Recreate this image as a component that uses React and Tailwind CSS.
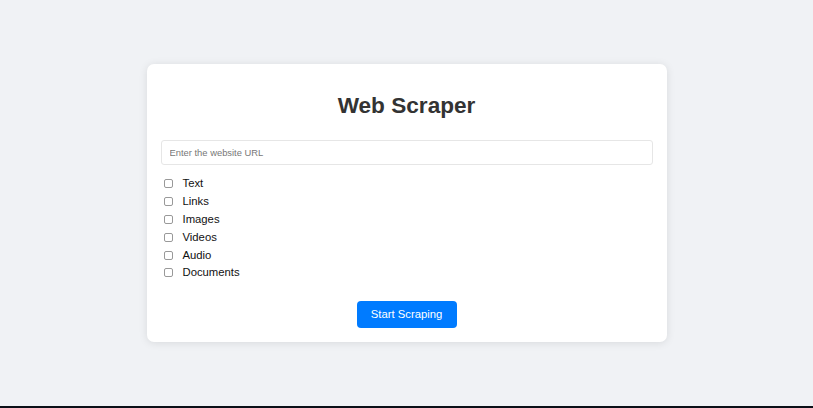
import { useState } from "react";

const options = ["Text", "Links", "Images", "Videos", "Audio", "Documents"];

export default function App() {
  const [url, setUrl] = useState("");
  const [selected, setSelected] = useState([]);

  const toggle = (name) =>
    setSelected((prev) =>
      prev.includes(name) ? prev.filter((n) => n !== name) : [...prev, name]
    );

  return (
    <div className="flex flex-col h-[408px] font-['Liberation_Sans',Arial,sans-serif]">
      <div className="flex-1 flex items-center justify-center bg-[#f0f2f5]">
        <div className="w-[520px] h-[278px] bg-white rounded-[7px] shadow-[0_1px_8px_rgba(0,0,0,0.1)] p-[14px] flex flex-col">
          <h1 className="mt-[15px] text-center text-[22.6px] leading-[26px] font-bold text-[#333]">
            Web Scraper
          </h1>

          <input
            type="text"
            value={url}
            onChange={(e) => setUrl(e.target.value)}
            placeholder="Enter the website URL"
            className="mt-[21px] h-[25px] w-full border border-[#e6e6e6] rounded-[3px] px-[8px] text-[9.4px] text-[#333] placeholder:text-[#777] outline-none"
          />

          <div className="mt-[10px] flex flex-col">
            {options.map((name) => (
              <label
                key={name}
                className="h-[17.8px] flex items-center text-[11.3px] text-[#111] cursor-pointer"
              >
                <input
                  type="checkbox"
                  checked={selected.includes(name)}
                  onChange={() => toggle(name)}
                  className="appearance-none ml-[3px] mr-[10px] w-[9px] h-[9px] border border-[#999] rounded-[2px] bg-white checked:bg-[#007bff] checked:border-[#007bff]"
                />
                {name}
              </label>
            ))}
          </div>

          <button className="mt-[19px] self-center w-[100px] h-[27px] bg-[#007bff] text-white text-[11.3px] rounded-[4px]">
            Start Scraping
          </button>
        </div>
      </div>
      <div className="h-[2px] bg-[#0b0f17]" />
    </div>
  );
}
